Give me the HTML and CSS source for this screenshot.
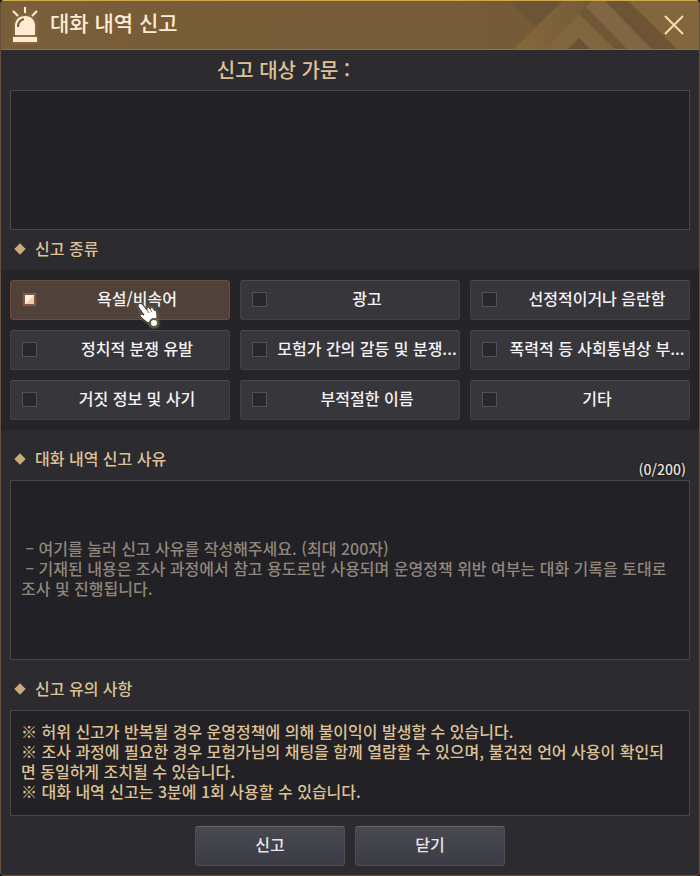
FILE: index.html
```html
<!DOCTYPE html>
<html lang="ko">
  <head>
    <meta charset="UTF-8" />
    <meta name="viewport" content="width=device-width, initial-scale=1.0" />
    <title>대화 내역 신고</title>
    <link rel="stylesheet" href="styles.css">
  </head>
  <body>
    <form class="window">
      <header class="title-bar">
        <svg class="title-pattern" width="230" height="48" viewBox="0 1 230 48" aria-hidden="true">
          <defs>
            <linearGradient id="band" x1="0" x2="1">
              <stop offset="0" stop-color="#86683b" />
              <stop offset="1" stop-color="#735a38" />
            </linearGradient>
          </defs>
          <path d="M40 0H95L65 27Z" fill="#6c5536" />
          <path d="M45 49L95 0H124L117 7L110 14L76 49Z" fill="url(#band)" />
          <path d="M124 0L117 7L158 49H146L110 14Z" fill="#6f5737" />
          <path d="M76 49L110 14L146 49H121L110 38L99 49Z" fill="#80653f" />
          <path d="M99 49L110 38L121 49Z" fill="#6a5334" />
          <path d="M117 7L124 0H135L183 49H158Z" fill="#806642" />
          <path d="M135 0H158L208 49H183Z" fill="#6c5435" />
          <path d="M158 0H230V49H208Z" fill="#81663e" />
        </svg>
        <svg class="siren" width="28" height="36" viewBox="0 0 28 36" aria-hidden="true">
          <g fill="#ffecd2">
            <path d="M1 30H25V35H1Z" />
            <path d="M3 28V19C3 13 7 9 13 9S23 13 23 19V28Z" />
          </g>
          <path d="M13 0V6M1 4L6 9M25 4L20 9" stroke="#ffecd2" stroke-width="2" fill="none" />
          <path d="M6 20C6 16 8 13 12 12" stroke="#76593a" stroke-width="2" fill="none" />
        </svg>
        <h1>대화 내역 신고</h1>
        <button type="button" class="close" aria-label="창 닫기">
          <svg width="20" height="20" viewBox="0 0 20 20" aria-hidden="true">
            <path d="M1 1L19 19M19 1L1 19" stroke="#ffdba6" stroke-width="2" />
          </svg>
        </button>
      </header>

      <div class="target">
        <label for="messages">신고 대상 가문 :</label>
        <span></span>
      </div>
      <textarea id="messages" class="panel messages" readonly></textarea>

      <h2>신고 종류</h2>
      <div class="kinds">
        <label class="kind">
          <input type="checkbox" checked />
          <span>욕설/비속어</span>
          <svg class="pointer" width="26" height="28" viewBox="0 0 26 28" aria-hidden="true">
            <path d="M2 3C3 1 5 1 7 3L11 8C10 5 13 4 14 7C15 5 17 5 18 8C20 8 21 10 21 13V17L13 21C10 20 8 18 5 15C3 13 5 11 8 13L3 6C2 5 2 4 2 3Z" fill="#fff" stroke="#24231d" stroke-width="1" />
            <path d="M11 8L13 11M14 7L16 10" stroke="#77756d" fill="none" />
            <circle cx="18" cy="21" r="4" fill="#fff" stroke="#55583a" stroke-width="2" />
          </svg>
        </label>
        <label class="kind"><input type="checkbox" /><span>광고</span></label>
        <label class="kind"><input type="checkbox" /><span>선정적이거나 음란함</span></label>
        <label class="kind"><input type="checkbox" /><span>정치적 분쟁 유발</span></label>
        <label class="kind"><input type="checkbox" /><span>모험가 간의 갈등 및 분쟁...</span></label>
        <label class="kind"><input type="checkbox" /><span>폭력적 등 사회통념상 부...</span></label>
        <label class="kind"><input type="checkbox" /><span>거짓 정보 및 사기</span></label>
        <label class="kind"><input type="checkbox" /><span>부적절한 이름</span></label>
        <label class="kind"><input type="checkbox" /><span>기타</span></label>
      </div>

      <div class="reason-head">
        <h2><label for="reason">대화 내역 신고 사유</label></h2>
        <span class="count">(0/200)</span>
      </div>
      <textarea id="reason" class="panel reason" maxlength="200" placeholder=" – 여기를 눌러 신고 사유를 작성해주세요. (최대 200자)&#10; – 기재된 내용은 조사 과정에서 참고 용도로만 사용되며 운영정책 위반 여부는 대화 기록을 토대로 조사 및 진행됩니다."></textarea>

      <h2 class="notice-head">신고 유의 사항</h2>
      <p class="panel notice">
        ※ 허위 신고가 반복될 경우 운영정책에 의해 불이익이 발생할 수 있습니다.<br />
        ※ 조사 과정에 필요한 경우 모험가님의 채팅을 함께 열람할 수 있으며, 불건전 언어 사용이 확인되면 동일하게 조치될 수 있습니다.<br />
        ※ 대화 내역 신고는 3분에 1회 사용할 수 있습니다.
      </p>

      <div class="actions">
        <button type="submit">신고</button>
        <button type="button">닫기</button>
      </div>
    </form>
  </body>
</html>
```
FILE: styles.css
```css
* {
  box-sizing: border-box;
}
body {
  margin: 0;
  background-color: #000;
  color: #dfc196;
  font-family: "Noto Sans CJK KR", sans-serif;
  font-size: 16px;
  font-weight: 500;
  line-height: 20px;
}
button,
textarea {
  font: inherit;
}
h1,
h2,
p {
  margin: 0;
}
.window {
  min-height: 100vh;
  background-color: #2c2b30;
  border: 1px solid #66503d;
  border-top-color: #cdaa4c;
  border-radius: 4px;
  overflow: hidden;
}
.title-bar {
  position: relative;
  display: flex;
  align-items: center;
  gap: 10px;
  height: 49px;
  padding: 0 14px 0 11px;
  background: linear-gradient(to right, #795e38, #745a38);
  border-bottom: 1px solid #92733f;
}
.title-pattern {
  position: absolute;
  top: 0;
  right: 0;
}
.siren {
  filter: drop-shadow(0 0 2px #a17c4e);
}
h1 {
  flex: 1;
  padding-bottom: 6px;
  color: #ffecd2;
  font-size: 21px;
  font-weight: 500;
  line-height: 30px;
}
.close {
  position: relative;
  display: flex;
  padding: 1px;
  background: none;
  border: none;
  cursor: pointer;
}
.target {
  display: grid;
  grid-template-columns: 1fr 1fr;
  align-items: center;
  height: 40px;
  font-size: 20px;
}
.target label {
  text-align: right;
}
.panel {
  display: block;
  width: calc(100% - 18px);
  margin: 0 9px;
  padding: 10px;
  background-color: #222125;
  border: 1px solid #4c443f;
  border-radius: 0;
  outline: none;
  color: #dfc196;
  resize: none;
}
.messages {
  height: 140px;
}
h2 {
  display: flex;
  align-items: center;
  gap: 11px;
  height: 40px;
  padding: 0 15px 4px;
  font-size: 16px;
  font-weight: 500;
}
h2::before {
  content: "";
  width: 8px;
  height: 8px;
  background-color: #cbaa7b;
  transform: translateY(1px) rotate(45deg);
}
.kinds {
  display: grid;
  grid-template-columns: repeat(3, 1fr);
  gap: 10px;
  padding: 10px 9px;
  background-color: #252527;
}
.kind {
  position: relative;
  display: flex;
  align-items: center;
  gap: 8px;
  min-width: 0;
  height: 40px;
  padding: 0 0 2px 11px;
  background-color: #37363b;
  border: 1px solid #424146;
  border-top-color: #4b4a50;
  border-radius: 3px;
  color: #f4f4f4;
}
.kind span {
  flex: 1;
  padding-bottom: 2px;
  text-align: center;
  white-space: nowrap;
}
.kind input {
  appearance: none;
  flex: none;
  width: 15px;
  height: 15px;
  margin: 0;
  background-color: #282828;
  border: 1px solid #515060;
}
.kind:has(input:checked) {
  background-color: #50423a;
  border-color: #65503f;
}
.kind input:checked {
  background: linear-gradient(135deg, #fff0dc 50%, #eccda5 50%) padding-box;
  border: 3px solid #805a45;
  outline: 1px solid #5f4539;
  outline-offset: -1px;
}
.pointer {
  position: absolute;
  top: 21px;
  left: 125px;
  filter: drop-shadow(0 0 1px #9a9a60);
}
.reason-head {
  display: flex;
  justify-content: space-between;
  margin-top: 10px;
}
.count {
  align-self: flex-end;
  padding: 0 13px 1px 0;
  color: #e8e4dc;
  font-size: 14px;
  text-shadow: 0 0 2px #000;
}
.reason {
  height: 180px;
  padding-top: 57px;
}
.reason::placeholder {
  color: #91867c;
  opacity: 1;
}
.notice-head {
  margin-top: 10px;
}
.notice {
  padding: 10px 20px 14px 10px;
}
.actions {
  display: flex;
  justify-content: center;
  gap: 10px;
  padding: 10px 9px 9px;
}
.actions button {
  width: 150px;
  height: 40px;
  padding: 0 0 4px;
  background: linear-gradient(#484851, #3c3c46);
  border: 1px solid #4d4d55;
  border-top-color: #66666e;
  border-radius: 3px;
  color: #e6e6e6;
  cursor: pointer;
}
```
